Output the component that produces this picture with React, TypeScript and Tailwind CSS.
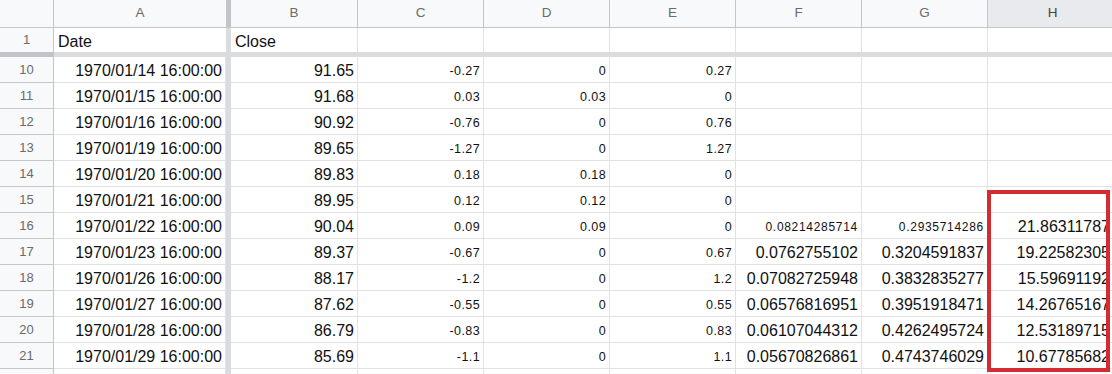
import React from "react";

type Row = {
  n: number;
  a: string;
  b: string;
  c: string;
  d: string;
  e: string;
  f?: string;
  g?: string;
  h?: string;
  small?: boolean;
};

const rows: Row[] = [
  { n: 10, a: "1970/01/14 16:00:00", b: "91.65", c: "-0.27", d: "0", e: "0.27" },
  { n: 11, a: "1970/01/15 16:00:00", b: "91.68", c: "0.03", d: "0.03", e: "0" },
  { n: 12, a: "1970/01/16 16:00:00", b: "90.92", c: "-0.76", d: "0", e: "0.76" },
  { n: 13, a: "1970/01/19 16:00:00", b: "89.65", c: "-1.27", d: "0", e: "1.27" },
  { n: 14, a: "1970/01/20 16:00:00", b: "89.83", c: "0.18", d: "0.18", e: "0" },
  { n: 15, a: "1970/01/21 16:00:00", b: "89.95", c: "0.12", d: "0.12", e: "0" },
  { n: 16, a: "1970/01/22 16:00:00", b: "90.04", c: "0.09", d: "0.09", e: "0", f: "0.08214285714", g: "0.2935714286", h: "21.86311787", small: true },
  { n: 17, a: "1970/01/23 16:00:00", b: "89.37", c: "-0.67", d: "0", e: "0.67", f: "0.0762755102", g: "0.3204591837", h: "19.22582305" },
  { n: 18, a: "1970/01/26 16:00:00", b: "88.17", c: "-1.2", d: "0", e: "1.2", f: "0.07082725948", g: "0.3832835277", h: "15.59691192" },
  { n: 19, a: "1970/01/27 16:00:00", b: "87.62", c: "-0.55", d: "0", e: "0.55", f: "0.06576816951", g: "0.3951918471", h: "14.26765167" },
  { n: 20, a: "1970/01/28 16:00:00", b: "86.79", c: "-0.83", d: "0", e: "0.83", f: "0.06107044312", g: "0.4262495724", h: "12.53189715" },
  { n: 21, a: "1970/01/29 16:00:00", b: "85.69", c: "-1.1", d: "0", e: "1.1", f: "0.05670826861", g: "0.4743746029", h: "10.67785682" },
];

const font = { fontFamily: '"Liberation Sans", Arial, sans-serif' };

function RowHead({ n }: { n: number | string }) {
  return (
    <div className="w-[54px] shrink-0 h-full flex items-center justify-center bg-[#f8f9fa] border-r border-b border-r-[#c4c7c5] border-b-[#c4c7c5] text-[13px] text-[#6b6b6b] pt-[1px]">
      {n}
    </div>
  );
}

function VBar({ dark }: { dark?: boolean }) {
  return <div className={`w-[5px] shrink-0 h-full ${dark ? "bg-[#c2c4c7]" : "bg-[#dadce0]"}`} />;
}

function Cell({
  w,
  children,
  small,
  left,
  extraSmall,
}: {
  w: string;
  children?: React.ReactNode;
  small?: boolean;
  left?: boolean;
  extraSmall?: boolean;
}) {
  const size = extraSmall
    ? "text-[12px] tracking-[0.7px]"
    : small
    ? "text-[12.5px] tracking-[0.4px]"
    : "text-[16px]";
  return (
    <div
      className={`${w} shrink-0 h-full flex items-center pt-[3px] border-r border-b border-[#e2e2e2] overflow-hidden whitespace-nowrap text-[#111] ${
        left ? "justify-start pl-[4px]" : "justify-end pr-[3px]"
      } ${size}`}
    >
      {children}
    </div>
  );
}

export default function App() {
  const colW = ["w-[127px]", "w-[126px]", "w-[126px]", "w-[126px]", "w-[126px]", "w-[126px]", "w-[130px]"];
  const letters = ["B", "C", "D", "E", "F", "G", "H"];
  return (
    <div className="relative w-[1112px] h-[374px] overflow-hidden bg-white" style={font}>
      {/* column header row */}
      <div className="flex h-[28px]">
        <div className="w-[54px] shrink-0 h-full bg-[#f8f9fa] border-r border-b border-[#c4c7c5]" />
        <div className="w-[172px] shrink-0 h-full flex items-center justify-center bg-[#f8f9fa] border-b border-[#c4c7c5] text-[13.5px] text-[#6b6b6b]">
          A
        </div>
        <VBar dark />
        {letters.map((l, i) => (
          <div
            key={l}
            className={`${colW[i]} shrink-0 h-full flex items-center justify-center border-r border-b border-[#c4c7c5] text-[13.5px] ${
              l === "H" ? "bg-[#e8eaed] text-[#444]" : "bg-[#f8f9fa] text-[#6b6b6b]"
            }`}
          >
            {l}
          </div>
        ))}
      </div>

      {/* row 1 */}
      <div className="flex h-[24px]">
        <div className="w-[54px] shrink-0 h-full flex items-center justify-center bg-[#f8f9fa] border-r border-[#c4c7c5] text-[13px] text-[#6b6b6b]">
          1
        </div>
        <div className="w-[172px] shrink-0 h-full flex items-center pl-[4px] pt-[3px] text-[16px] text-[#111]">Date</div>
        <VBar />
        <div className="w-[127px] shrink-0 h-full flex items-center pl-[4px] pt-[3px] border-r border-[#e2e2e2] text-[16px] text-[#111]">
          Close
        </div>
        {colW.slice(1).map((w, i) => (
          <div key={i} className={`${w} shrink-0 h-full border-r border-[#e2e2e2]`} />
        ))}
      </div>

      {/* frozen horizontal bar */}
      <div className="flex h-[5px]">
        <div className="w-[54px] shrink-0 h-full bg-[#c2c4c7]" />
        <div className="flex-1 h-full bg-[#dadce0]" />
      </div>

      {/* data rows */}
      {rows.map((r) => (
        <div key={r.n} className="flex h-[26px]">
          <RowHead n={r.n} />
          <Cell w="w-[172px]">{r.a}</Cell>
          <VBar />
          <Cell w="w-[127px]">{r.b}</Cell>
          <Cell w="w-[126px]" small>
            {r.c}
          </Cell>
          <Cell w="w-[126px]" small>
            {r.d}
          </Cell>
          <Cell w="w-[126px]" small>
            {r.e}
          </Cell>
          <Cell w="w-[126px]" extraSmall={r.small}>
            {r.f}
          </Cell>
          <Cell w="w-[126px]" extraSmall={r.small}>
            {r.g}
          </Cell>
          <Cell w="w-[126px]">{r.h}</Cell>
        </div>
      ))}

      {/* partial next row */}
      <div className="flex h-[26px]">
        <RowHead n="" />
        <Cell w="w-[172px]" />
        <VBar />
        <Cell w="w-[127px]" />
        <Cell w="w-[126px]" />
        <Cell w="w-[126px]" />
        <Cell w="w-[126px]" />
        <Cell w="w-[126px]" />
        <Cell w="w-[126px]" />
        <Cell w="w-[126px]" />
      </div>

      {/* red highlight box */}
      <div className="absolute left-[987px] top-[190px] w-[123px] h-[182px] border-[4px] border-[#d42a30] pointer-events-none" />
    </div>
  );
}
